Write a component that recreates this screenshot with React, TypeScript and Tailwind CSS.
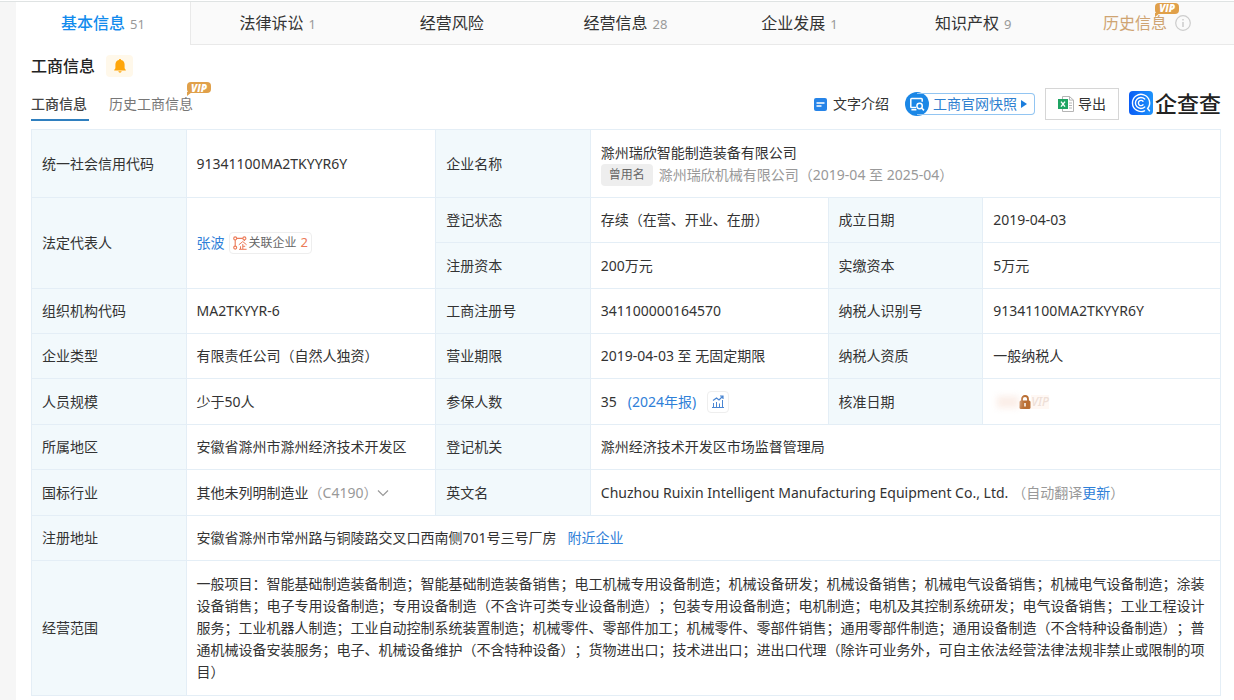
import type { ReactNode } from 'react';

const tabs = [
  { title: '基本信息', count: '51', active: true },
  { title: '法律诉讼', count: '1' },
  { title: '经营风险' },
  { title: '经营信息', count: '28' },
  { title: '企业发展', count: '1' },
  { title: '知识产权', count: '9' },
];

const scope =
  '一般项目：智能基础制造装备制造；智能基础制造装备销售；电工机械专用设备制造；机械设备研发；机械设备销售；机械电气设备销售；机械电气设备制造；涂装设备销售；电子专用设备制造；专用设备制造（不含许可类专业设备制造）；包装专用设备制造；电机制造；电机及其控制系统研发；电气设备销售；工业工程设计服务；工业机器人制造；工业自动控制系统装置制造；机械零件、零部件加工；机械零件、零部件销售；通用零部件制造；通用设备制造（不含特种设备制造）；普通机械设备安装服务；电子、机械设备维护（不含特种设备）；货物进出口；技术进出口；进出口代理（除许可业务外，可自主依法经营法律法规非禁止或限制的项目）';

function VipBadge() {
  return (
    <span className="relative flex h-[11px] w-6 items-center justify-center rounded-sm bg-[#e0a04a] font-['Open_Sans',sans-serif] text-[10px] leading-none font-extrabold text-white italic">
      <svg className="absolute top-[10px] left-0" width="5" height="4" viewBox="0 0 5 4" fill="#e0a04a">
        <path d="M0 0h5L0 4z" />
      </svg>
      VIP
    </span>
  );
}

function Th({ children, rowSpan }: { children: ReactNode; rowSpan?: number }) {
  return (
    <th
      scope="row"
      rowSpan={rowSpan}
      className="border border-[#e4eef6] bg-[#f2f9fc] px-[10px] text-left align-middle font-normal text-[#333]"
    >
      {children}
    </th>
  );
}

function Td({ children, colSpan, rowSpan }: { children: ReactNode; colSpan?: number; rowSpan?: number }) {
  return (
    <td colSpan={colSpan} rowSpan={rowSpan} className="border border-[#e4eef6] px-[10px] align-middle">
      {children}
    </td>
  );
}

function RelationIcon() {
  return (
    <svg width="14" height="14" viewBox="0 0 14 14" fill="none" stroke="#ec7a57" strokeWidth="1.1">
      <circle cx="2.2" cy="2.4" r="1.5" />
      <circle cx="11.4" cy="2.4" r="1.5" />
      <circle cx="2.2" cy="11.6" r="1.5" />
      <path d="M3.700 2.400h6.200M2.200 3.900v6.200M11.400 3.900v1.200" />
      <path d="M5.800 8.800 9.800 5.600l3.800 3.200M9.800 8v5M9.800 10.300h2.400M7.500 10.300V13M6 13.300h7.600" strokeWidth="1" />
    </svg>
  );
}

function TrendIcon() {
  return (
    <svg width="12" height="13" viewBox="0 0 12 13" fill="none" stroke="#4a86d2" strokeWidth="1">
      <path d="M0 12.5h12M1.5 12V8M4.5 12V7M7.5 12V8.5M10.5 12V5" />
      <path d="M1 5.5 4.5 3l2.5 2L10.5 1.5M8 1h3v3" strokeWidth="1.2" />
    </svg>
  );
}

function SnapshotIcon() {
  return (
    <svg width="24" height="24" viewBox="0 0 24 24" fill="none" stroke="#fff">
      <circle cx="12" cy="12" r="12" fill="#1b87e6" stroke="none" />
      <path d="M11 15.6H6.6a.8.8 0 0 1-.8-.8V7.4a.8.8 0 0 1 .8-.8h9.8a.8.8 0 0 1 .8.8v2.4M6.4 17.8h5" strokeWidth="1.5" />
      <circle cx="14.6" cy="14" r="2.7" strokeWidth="1.5" />
      <path d="m16.6 16 2.4 2.4" strokeWidth="1.6" />
    </svg>
  );
}

function ExcelIcon() {
  return (
    <svg width="16" height="16" viewBox="0 0 16 16" fill="none">
      <path d="M4.5.5h7l4 3.6v11.4h-11z" fill="#fff" stroke="#b5b5b5" />
      <path d="M11.5.5v3.6h4M11 7h3M11 9.5h3M11 12h3" stroke="#b5b5b5" />
      <rect y="3" width="10" height="10" fill="#1fa463" />
      <path d="m3 5.6 4 5M7 5.6l-4 5" stroke="#fff" strokeWidth="1.4" />
    </svg>
  );
}

function LogoIcon() {
  return (
    <svg width="24" height="24" viewBox="0 0 24 24" fill="none" stroke="#fff" strokeLinecap="round">
      <defs>
        <linearGradient id="logo" x1="0" y1="0" x2="1" y2="0">
          <stop offset="0" stopColor="#0a5cf5" />
          <stop offset="1" stopColor="#1e93fb" />
        </linearGradient>
      </defs>
      <rect width="24" height="24" rx="4" fill="url(#logo)" stroke="none" />
      <path d="M15.500 19.800A8.600 8.600 0 1 1 18.600 17.500l1.900 2.300" strokeWidth="1.4" />
      <path d="M15.7 16A5.5 5.5 0 1 1 15.7 8" strokeWidth="1.4" />
      <path d="M14 13.7A2.6 2.6 0 1 1 14 10.3" strokeWidth="1.4" />
    </svg>
  );
}

// Faint account code repeated diagonally over the page
function Watermark() {
  const marks: { x: number; y: number }[] = [];
  for (let i = -4; i < 8; i++) {
    for (let j = -3; j < 16; j++) {
      const x = 108 + i * 211 + j * 57;
      const y = 54 + i * 13 + j * 56;
      if (x > 0 && x < 1140 && y > 95 && y < 690) marks.push({ x, y });
    }
  }
  return (
    <svg aria-hidden="true" className="pointer-events-none absolute inset-0 h-full w-full">
      {marks.map((mark, index) => (
        <text
          key={index}
          transform={`translate(${mark.x} ${mark.y}) rotate(-45)`}
          fontSize="17"
          fill="#000"
          fillOpacity="0.018"
        >
          8 E U 2 R V P
        </text>
      ))}
    </svg>
  );
}

export default function App() {
  return (
    <div
      lang="zh-CN"
      className="relative min-h-screen overflow-hidden bg-[#f6f6f6] pt-px pl-4 font-['Noto_Sans','Noto_Sans_CJK_SC',sans-serif] text-sm leading-[22px] text-[#333] [text-spacing-trim:space-all]"
    >
      <div className="absolute inset-x-0 top-0 h-[2px] border-b border-[#dfe3e3] bg-white" />
      <main className="min-h-screen bg-white">
        <nav className="flex h-11">
          {tabs.map((tab) => (
            <button
              key={tab.title}
              className={
                tab.active
                  ? 'flex flex-1 items-baseline justify-center gap-[5px] border-r border-[#e9e9e9] text-base leading-[44px] font-medium text-[#128bed]'
                  : 'flex flex-1 items-baseline justify-center gap-[5px] border-b border-[#e9e9e9] bg-[#fafafa] text-base leading-[44px] text-[#333]'
              }
            >
              {tab.title}
              {tab.count && <span className="text-[13px] font-normal text-[#999]">{tab.count}</span>}
            </button>
          ))}
          <button className="flex flex-1 items-center justify-center gap-2 border-b border-[#e9e9e9] bg-[#fafafa] text-base text-[#cfa472]">
            <span className="relative">
              历史信息
              <span className="absolute -top-2 -right-3">
                <VipBadge />
              </span>
            </span>
            <svg width="16" height="16" viewBox="0 0 16 16" fill="none" stroke="#ccc" strokeWidth="1.2">
              <circle cx="8" cy="8" r="7.3" />
              <path d="M8 7v5M8 4v1.5" strokeWidth="1.5" />
            </svg>
          </button>
        </nav>

        <section className="pt-[10px] pr-[13px] pb-1 pl-[15px]">
          <div className="flex items-center gap-[11px]">
            <h2 className="text-base leading-[22px] font-medium text-[#222]">工商信息</h2>
            <button aria-label="监控" className="flex h-[22px] w-[27px] items-center justify-center rounded-sm bg-[#fff8ea]">
              <svg width="12" height="14" viewBox="0 0 12 14" fill="#ffa60a">
                <path d="M6 0c.7 0 1.1.5 1.1 1.1 2.200.5 3.500 2.300 3.500 4.500v3.600l1.200 1.700v.7H.2v-.7l1.200-1.700V5.600c0-2.200 1.300-4 3.500-4.500C4.900.5 5.300 0 6 0zM4.300 12.300h3.400c-.2.900-.9 1.400-1.700 1.400s-1.500-.5-1.700-1.400z" />
              </svg>
            </button>
          </div>

          <div className="mt-[11px] mb-2 flex items-start justify-between">
            <div className="flex gap-5">
              <button className="h-[33px] w-[58px] border-b-2 border-[#2f7fbf] text-left font-medium text-[#444]">
                工商信息
              </button>
              <button className="relative h-[33px] border-b-2 border-transparent text-[#777]">
                历史工商信息
                <span className="absolute -top-[6px] -right-[18px]">
                  <VipBadge />
                </span>
              </button>
            </div>
            <div className="flex h-8 items-center">
              <button className="mr-4 flex items-center gap-[6px]">
                <svg width="13" height="13" viewBox="0 0 13 13" fill="none" stroke="#fff" strokeWidth="1.5">
                  <rect width="13" height="13" rx="2" fill="#2684e8" stroke="none" />
                  <path d="M2.5 5h8M2.5 8h5" />
                </svg>
                文字介绍
              </button>
              <button className="mr-[10px] flex items-center text-[#2f80d0]">
                <SnapshotIcon />
                <span className="-ml-3 flex h-[22px] items-center gap-1 rounded-r-sm border border-l-0 border-[#92c5f2] pr-[7px] pl-4">
                  工商官网快照
                  <svg width="6" height="8" viewBox="0 0 6 8" fill="#1b7ddd">
                    <path d="M0 0 6 4 0 8z" />
                  </svg>
                </span>
              </button>
              <button className="mr-[10px] flex h-8 items-center gap-1 border border-[#d6d6d6] px-3">
                <ExcelIcon />
                导出
              </button>
              <div className="mb-[2px] flex items-center gap-[2px] text-[22px] leading-6 font-medium text-[#222]">
                <LogoIcon />
                企查查
              </div>
            </div>
          </div>

          <table className="w-full table-fixed border-collapse">
            <colgroup>
              <col className="w-[13%]" />
              <col className="w-[21%]" />
              <col className="w-[13%]" />
              <col className="w-[20%]" />
              <col className="w-[13%]" />
              <col className="w-[20%]" />
            </colgroup>
            <tbody>
              <tr className="h-[68px]">
                <Th>统一社会信用代码</Th>
                <Td>91341100MA2TKYYR6Y</Td>
                <Th>企业名称</Th>
                <Td colSpan={3}>
                  <div>滁州瑞欣智能制造装备有限公司</div>
                  <div className="flex items-center gap-[6px] text-[#999]">
                    <span className="rounded-sm bg-[#eee] px-2 text-xs leading-[22px] text-[#666]">曾用名</span>
                    滁州瑞欣机械有限公司（2019-04 至 2025-04）
                  </div>
                </Td>
              </tr>
              <tr className="h-[45px]">
                <Th rowSpan={2}>法定代表人</Th>
                <Td rowSpan={2}>
                  <div className="flex items-center gap-1">
                    <a href="#person" className="text-[#2f80d8]">
                      张波
                    </a>
                    <a
                      href="#related"
                      className="flex h-[22px] items-center gap-[2px] rounded-sm border border-[#eee] px-[3px] text-xs text-[#666]"
                    >
                      <RelationIcon />
                      关联企业
                      <span className="ml-[2px] text-[13px] text-[#ec7a57]">2</span>
                    </a>
                  </div>
                </Td>
                <Th>登记状态</Th>
                <Td>存续（在营、开业、在册）</Td>
                <Th>成立日期</Th>
                <Td>2019-04-03</Td>
              </tr>
              <tr className="h-[46px]">
                <Th>注册资本</Th>
                <Td>200万元</Td>
                <Th>实缴资本</Th>
                <Td>5万元</Td>
              </tr>
              <tr className="h-[45px]">
                <Th>组织机构代码</Th>
                <Td>MA2TKYYR-6</Td>
                <Th>工商注册号</Th>
                <Td>341100000164570</Td>
                <Th>纳税人识别号</Th>
                <Td>91341100MA2TKYYR6Y</Td>
              </tr>
              <tr className="h-[45px]">
                <Th>企业类型</Th>
                <Td>有限责任公司（自然人独资）</Td>
                <Th>营业期限</Th>
                <Td>2019-04-03 至 无固定期限</Td>
                <Th>纳税人资质</Th>
                <Td>一般纳税人</Td>
              </tr>
              <tr className="h-[46px]">
                <Th>人员规模</Th>
                <Td>少于50人</Td>
                <Th>参保人数</Th>
                <Td>
                  <div className="flex items-center gap-[11px]">
                    35
                    <a href="#report" className="text-[#2f80d8]">
                      (2024年报)
                    </a>
                    <button
                      aria-label="趋势"
                      className="flex h-[22px] w-[22px] items-center justify-center rounded-sm border border-[#eee]"
                    >
                      <TrendIcon />
                    </button>
                  </div>
                </Td>
                <Th>核准日期</Th>
                <Td>
                  <div className="flex items-center pl-1">
                    <span className="h-3 w-[22px] bg-[#fbeee8] blur-[3px]" />
                    <svg width="12" height="14" viewBox="0 0 12 14" fill="none">
                      <path d="M3 6V4a3 3 0 0 1 6 0v2" stroke="#b96d31" strokeWidth="1.8" />
                      <rect x="0.5" y="5.5" width="11" height="8.5" rx="1.5" fill="#b96d31" />
                      <path d="M6 8v3.5" stroke="#fff" strokeWidth="1.5" />
                    </svg>
                    <span className="bg-[#fff8f4] text-xs leading-[14px] font-medium text-[#eedfd7] italic">VIP</span>
                  </div>
                </Td>
              </tr>
              <tr className="h-[45px]">
                <Th>所属地区</Th>
                <Td>安徽省滁州市滁州经济技术开发区</Td>
                <Th>登记机关</Th>
                <Td colSpan={3}>滁州经济技术开发区市场监督管理局</Td>
              </tr>
              <tr className="h-[46px]">
                <Th>国标行业</Th>
                <Td>
                  <div className="flex items-center">
                    其他未列明制造业
                    <span className="text-[#999]">（C4190）</span>
                    <svg width="12" height="8" viewBox="0 0 12 8" fill="none" stroke="#999" strokeWidth="1.2">
                      <path d="m1 1.5 5 5 5-5" />
                    </svg>
                  </div>
                </Td>
                <Th>英文名</Th>
                <Td colSpan={3}>
                  Chuzhou Ruixin Intelligent Manufacturing Equipment Co., Ltd.
                  <span className="ml-1 text-[#999]">
                    （自动翻译
                    <a href="#update" className="text-[#2f80d8]">
                      更新
                    </a>
                    ）
                  </span>
                </Td>
              </tr>
              <tr className="h-[45px]">
                <Th>注册地址</Th>
                <Td colSpan={5}>
                  安徽省滁州市常州路与铜陵路交叉口西南侧701号三号厂房
                  <a href="#nearby" className="ml-[11px] text-[#2f80d8]">
                    附近企业
                  </a>
                </Td>
              </tr>
              <tr className="h-[135px]">
                <Th>经营范围</Th>
                <Td colSpan={5}>{scope}</Td>
              </tr>
            </tbody>
          </table>
        </section>
      </main>
      <Watermark />
    </div>
  );
}
